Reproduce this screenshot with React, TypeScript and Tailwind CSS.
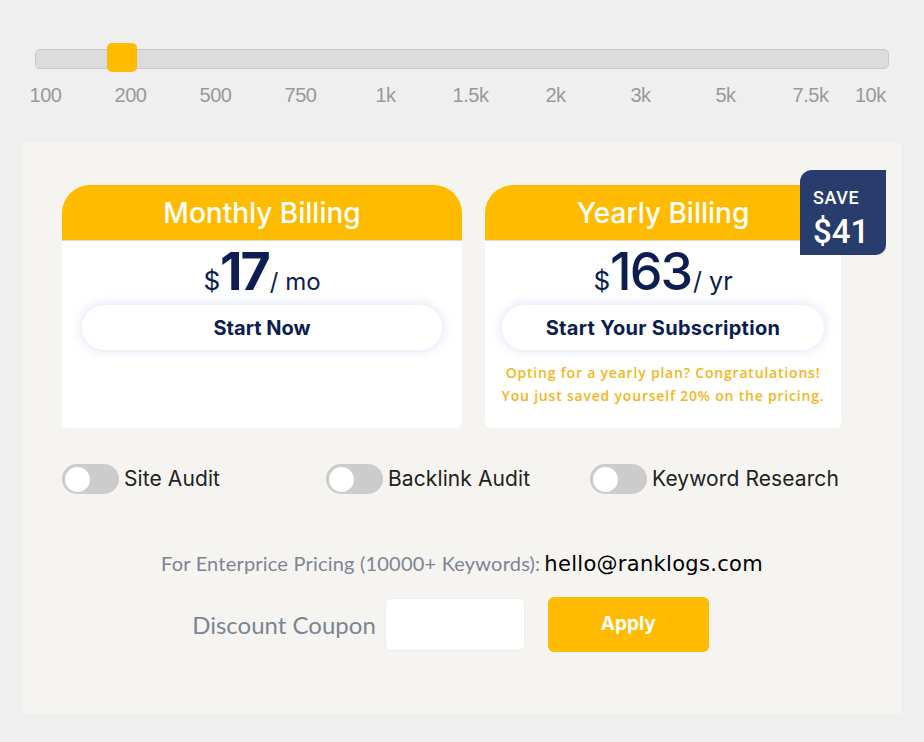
import React from 'react';

const labels = ['100', '200', '500', '750', '1k', '1.5k', '2k', '3k', '5k', '7.5k'];

const addons = ['Site Audit', 'Backlink Audit', 'Keyword Research'];

function Toggle({ label }: { label: string }) {
  return (
    <div className="flex w-[264px] items-center gap-[5px]">
      <div className="flex h-[30px] w-[57px] items-center rounded-full bg-[#cccccc] pl-[3px]">
        <div className="h-[25px] w-[25px] rounded-full bg-white" />
      </div>
      <span className="text-[21px] leading-[24px] tracking-[0.1px] text-[#222222]">{label}</span>
    </div>
  );
}

export default function App() {
  return (
    <div className="min-h-screen bg-[#efefef] pt-[49px] font-['Inter',sans-serif]">
      {/* keyword slider */}
      <div className="px-[35px]">
        <div className="relative h-[20px] rounded-[5px] border border-[#c9c9c9] bg-[#dcdcdc]">
          <div className="absolute left-[71px] top-[-7px] h-[29px] w-[30px] rounded-[5px] bg-[#ffbb00]" />
        </div>
      </div>
      <div className="mt-[14px] flex pl-[3px] font-['Liberation_Sans',Arial,sans-serif] text-[20px] leading-[24px] text-[#999999]">
        {labels.map((l) => (
          <span key={l} className="w-[85px] text-center tracking-[-0.5px]">
            {l}
          </span>
        ))}
        <span className="ml-[2px] tracking-[-0.5px]">10k</span>
      </div>

      {/* pricing panel */}
      <div className="mx-[23px] mt-[36px] h-[571px] bg-[#f5f4f0] pt-[42px]">
        <div className="flex gap-[23px] pl-[39px]">
          <div className="h-[243px] w-[400px] rounded-b-[5px] rounded-t-[28px] bg-white">
            <div className="flex h-[56px] items-center justify-center rounded-t-[28px] border-b border-[#d9d9d9] bg-[#ffbb00]">
              <span className="text-[28px] font-medium text-white">Monthly Billing</span>
            </div>
            <div className="mt-[5px] flex h-[52px] items-baseline justify-center leading-none text-[#0b1d51]">
              <span className="text-[26px]">$</span>
              <span className="text-[52px] font-bold tracking-[-2px]">17</span>
              <span className="ml-[1px] text-[24px]">/ mo</span>
            </div>
            <div className="mx-[20px] mt-[7px] flex h-[45px] items-center justify-center rounded-full bg-white shadow-[0_0_12px_rgba(90,100,200,0.22)]">
              <span className="text-[20px] font-bold text-[#0b1d51]">Start Now</span>
            </div>
          </div>

          <div className="relative h-[243px] w-[356px] rounded-b-[5px] rounded-t-[28px] bg-white">
            <div className="flex h-[56px] items-center justify-center rounded-t-[28px] border-b border-[#d9d9d9] bg-[#ffbb00]">
              <span className="text-[28px] font-medium text-white">Yearly Billing</span>
            </div>
            <div className="mt-[5px] flex h-[52px] items-baseline justify-center leading-none text-[#0b1d51]">
              <span className="text-[26px]">$</span>
              <span className="text-[52px] font-medium tracking-[-2px]">163</span>
              <span className="ml-[2px] text-[25px]">/ yr</span>
            </div>
            <div className="mx-[17px] mt-[7px] flex h-[45px] items-center justify-center rounded-full bg-white shadow-[0_0_12px_rgba(90,100,200,0.22)]">
              <span className="text-[20px] font-bold tracking-[0.3px] text-[#0b1d51]">Start Your Subscription</span>
            </div>
            <p className="mt-[11px] text-center font-['Open_Sans',sans-serif] text-[14px] font-semibold leading-[23px] tracking-[0.8px] text-[#f4b619]">
              Opting for a yearly plan? Congratulations!
              <br />
              You just saved yourself 20% on the pricing.
            </p>

            <div className="absolute right-[-45px] top-[-15px] h-[85px] w-[86px] rounded-br-[10px] rounded-tl-[12px] bg-[#283d6d] pl-[13px] pt-[18px] font-['Roboto',sans-serif] text-white">
              <div className="text-[18px] font-medium leading-[20px] tracking-[0.6px]">SAVE</div>
              <div className="mt-[7px] text-[33px] font-medium leading-[34px]">$41</div>
            </div>
          </div>
        </div>

        <div className="mt-[36px] flex pl-[39px]">
          {addons.map((a) => (
            <Toggle key={a} label={a} />
          ))}
        </div>

        <div className="mt-[55px] text-center leading-[28px]">
          <span className="font-['Lato',sans-serif] text-[20px] tracking-[0.2px] text-[#7d8595]">
            For Enterprice Pricing (10000+ Keywords):
          </span>
          <span className="ml-[4px] font-['DejaVu_Sans',sans-serif] text-[21px] tracking-[0.3px] text-black">
            hello@ranklogs.com
          </span>
        </div>

        <div className="mr-[23px] mt-[18px] flex items-center justify-center">
          <span className="font-['Lato',sans-serif] text-[24px] text-[#7d8595]">Discount Coupon</span>
          <input
            type="text"
            className="ml-[9px] h-[53px] w-[140px] rounded-[6px] border border-[#ececec] bg-white outline-none"
          />
          <button className="ml-[23px] h-[55px] w-[161px] rounded-[6px] bg-[#ffbb00] text-[19px] font-bold text-white">
            Apply
          </button>
        </div>
      </div>
    </div>
  );
}
